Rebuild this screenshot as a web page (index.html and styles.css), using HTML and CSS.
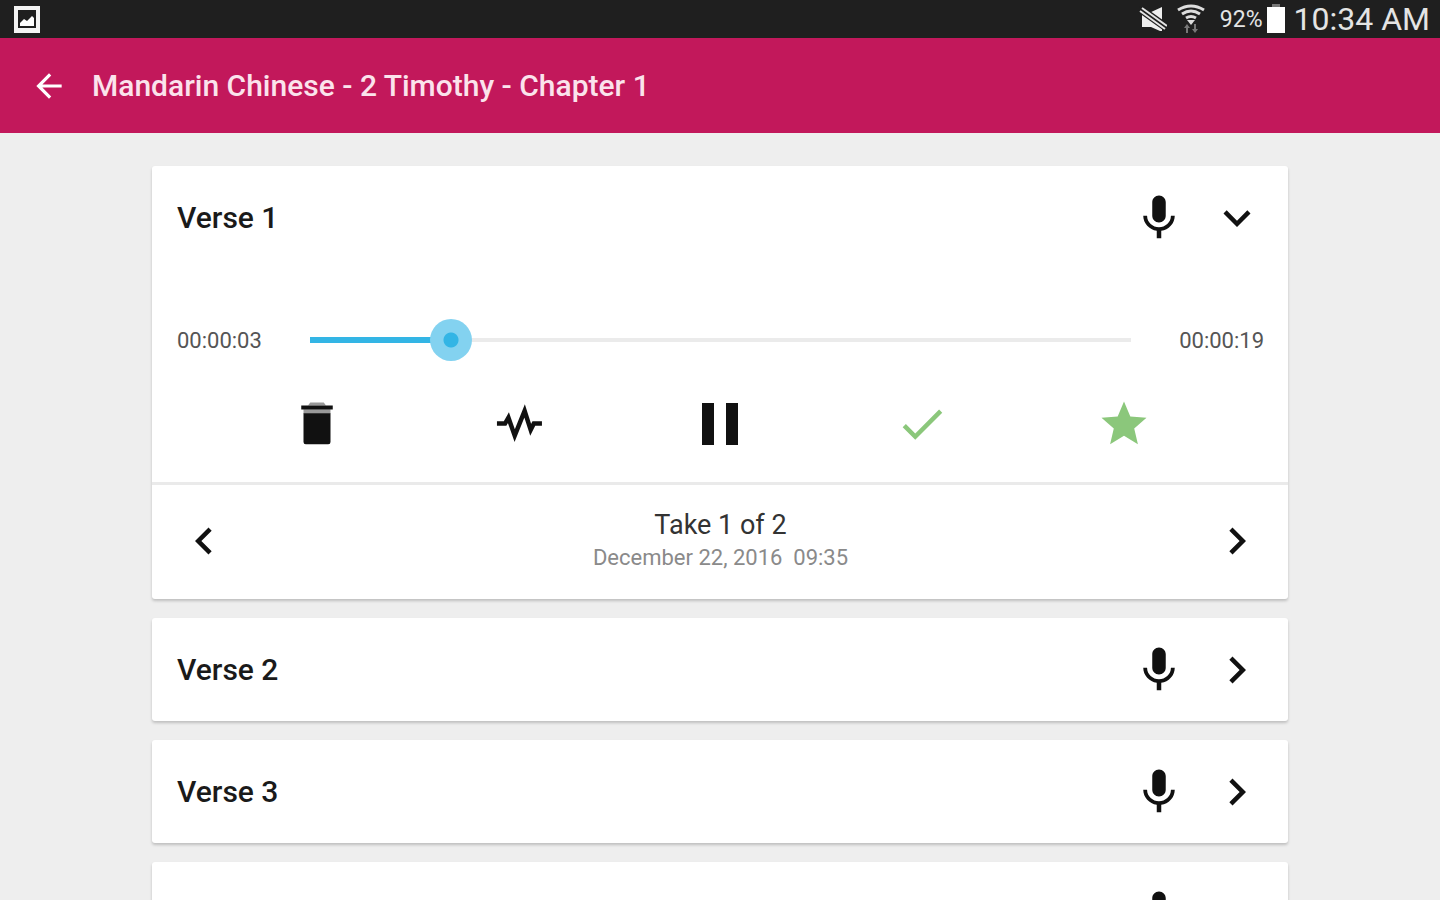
FILE: index.html
```
<!DOCTYPE html>
<html lang="en">
<head>
    <meta charset="UTF-8">
    <meta name="viewport" content="width=device-width, initial-scale=1.0">
    <title>Mandarin Chinese - 2 Timothy - Chapter 1</title>
    <link rel="stylesheet" href="styles.css">
</head>
<body>

<!-- Shared icons -->
<svg class="sprite" aria-hidden="true">
    <symbol id="mic" viewBox="0 0 24 24">
        <path d="M12 14c1.66 0 2.99-1.34 2.99-3L15 5c0-1.66-1.34-3-3-3S9 3.34 9 5v6c0 1.66 1.34 3 3 3zm5.3-3c0 3-2.54 5.1-5.3 5.1S6.7 14 6.7 11H5c0 3.41 2.72 6.23 6 6.72V21h2v-3.28c3.28-.48 6-3.3 6-6.72h-1.7z"/>
    </symbol>
    <symbol id="down" viewBox="0 0 24 24">
        <path d="M16.59 8.59L12 13.17 7.41 8.59 6 10l6 6 6-6z"/>
    </symbol>
    <symbol id="right" viewBox="0 0 24 24">
        <path d="M10 6L8.59 7.41 13.17 12l-4.58 4.59L10 18l6-6z"/>
    </symbol>
    <symbol id="left" viewBox="0 0 24 24">
        <path d="M15.41 7.41L14 6l-6 6 6 6 1.41-1.41L10.83 12z"/>
    </symbol>
</svg>

<div class="status-bar">
    <svg class="status-picture" viewBox="0 0 28 30">
        <path fill="#f4f4f4" fill-rule="evenodd" d="M1 2h26v27H1zM5 6v18h18V6z"/>
        <path fill="#fff" d="M7 22v-3l4-4 3 2 5-5 2 2v8z"/>
    </svg>
    <div class="status-right">
        <svg class="status-mute" viewBox="0 0 28 26">
            <path fill="#eee" d="M3 7h7l13-6v24h-2l-9-4H3z"/>
            <path stroke="#1f1f1f" stroke-width="8" d="M0 2l28 20"/>
            <path stroke="#e4e4e4" stroke-width="2" d="M1 5l25 18M3 2l25 18"/>
        </svg>
        <svg class="status-wifi" viewBox="0 0 28 32">
            <g fill="none" stroke="#ddd" stroke-width="3">
                <path d="M1 7q13-8 26 0"/>
                <path d="M5 11q9-6 18 0"/>
                <path d="M9 15q5-3 10 0"/>
            </g>
            <path fill="#ddd" d="M10 17h8l-4 5z"/>
            <path fill="#777" d="M9 30v-5H7l3-4 3 4h-2v5zM17 21v5h-2l3 4 3-4h-2v-5z"/>
        </svg>
        <span class="battery-level">92%</span>
        <svg class="status-battery" viewBox="0 0 20 30">
            <path fill="#777" d="M6 0h8v4H6z"/>
            <path fill="#fff" d="M1 3h18v26H1z"/>
        </svg>
        <span class="clock">10:34 AM</span>
    </div>
</div>

<header>
    <button class="back" aria-label="Back">
        <svg viewBox="0 0 24 24"><path d="M20 11H7.83l5.59-5.59L12 4l-8 8 8 8 1.41-1.41L7.83 13H20v-2z"/></svg>
    </button>
    <h1>Mandarin Chinese - 2 Timothy - Chapter 1</h1>
</header>

<main class="verses">
    <section class="card">
        <div class="card-header">
            <h2>Verse 1</h2>
            <button aria-label="Record verse 1"><svg class="icon"><use href="#mic"/></svg></button>
            <button aria-label="Collapse verse 1"><svg class="icon"><use href="#down"/></svg></button>
        </div>
        <div class="player">
            <div class="seek">
                <span class="time">00:00:03</span>
                <input type="range" class="seek-bar" min="0" max="19000" value="2930" aria-label="Playback position">
                <span class="time">00:00:19</span>
            </div>
            <div class="actions">
                <button aria-label="Delete take">
                    <svg class="icon" viewBox="0 0 24 24">
                        <path fill="#999" d="M9 2.4h6l1 1.4H8zM6 5.4h12v2H6z"/>
                        <path d="M5 3.8h14v1.8H5zM6 7.2h12V20q0 1-1 1H7q-1 0-1-1z"/>
                    </svg>
                </button>
                <button aria-label="Edit take">
                    <svg class="icon" viewBox="0 0 24 24">
                        <path class="wave" d="M2.2 11.8h3.6l1.5-2.6 2.8 8 4.4-11 2.7 8.4 1.4-2.8h3.6"/>
                    </svg>
                </button>
                <button aria-label="Pause">
                    <svg class="icon icon-large" viewBox="0 0 24 24"><path d="M6 19h4V5H6v14zm8-14v14h4V5h-4z"/></svg>
                </button>
                <button class="green" aria-label="Check take">
                    <svg class="icon" viewBox="0 0 24 24"><path d="M9 16.17L4.83 12l-1.42 1.41L9 19 21 7l-1.41-1.41z"/></svg>
                </button>
                <button class="green" aria-label="Rate take">
                    <svg class="icon" viewBox="0 0 24 24"><path d="M12 17.27L18.18 21l-1.64-7.03L22 9.24l-7.19-.61L12 2 9.19 8.63 2 9.24l5.46 4.73L5.82 21z"/></svg>
                </button>
            </div>
        </div>
        <div class="takes">
            <button aria-label="Previous take"><svg class="icon"><use href="#left"/></svg></button>
            <div class="take-info">
                <p class="take-name">Take 1 of 2</p>
                <p class="take-date">December 22, 2016&nbsp; 09:35</p>
            </div>
            <button aria-label="Next take"><svg class="icon"><use href="#right"/></svg></button>
        </div>
    </section>

    <section class="card">
        <div class="card-header">
            <h2>Verse 2</h2>
            <button aria-label="Record verse 2"><svg class="icon"><use href="#mic"/></svg></button>
            <button aria-label="Expand verse 2"><svg class="icon"><use href="#right"/></svg></button>
        </div>
    </section>

    <section class="card">
        <div class="card-header">
            <h2>Verse 3</h2>
            <button aria-label="Record verse 3"><svg class="icon"><use href="#mic"/></svg></button>
            <button aria-label="Expand verse 3"><svg class="icon"><use href="#right"/></svg></button>
        </div>
    </section>

    <section class="card">
        <div class="card-header">
            <h2>Verse 4</h2>
            <button aria-label="Record verse 4"><svg class="icon"><use href="#mic"/></svg></button>
            <button aria-label="Expand verse 4"><svg class="icon"><use href="#right"/></svg></button>
        </div>
    </section>
</main>

</body>
</html>
```
FILE: styles.css
```
* {
    box-sizing: border-box;
}
body {
    margin: 0;
    font-family: Roboto, "Liberation Sans", sans-serif;
    display: flex;
    flex-direction: column;
    height: 100vh;
    background-color: #eeeeee;
    color: #1a1a1a;
}
h1, h2, p {
    margin: 0;
}
button {
    display: flex;
    align-items: center;
    justify-content: center;
    padding: 0;
    border: none;
    background: none;
    color: #111;
    cursor: pointer;
}
svg {
    display: block;
    fill: currentColor;
}
.sprite {
    display: none;
}
.icon {
    width: 54px;
    height: 54px;
}
.icon-large {
    width: 72px;
    height: 72px;
}
/* Status bar */
.status-bar {
    flex: none;
    display: flex;
    align-items: center;
    justify-content: space-between;
    height: 38px;
    padding: 0 10px 0 13px;
    background-color: #1f1f1f;
    color: #e4e4e4;
}
.status-picture {
    width: 28px;
    height: 30px;
}
.status-right {
    display: flex;
    align-items: center;
}
.status-mute {
    width: 28px;
    height: 26px;
    margin-right: 10px;
}
.status-wifi {
    width: 28px;
    height: 32px;
    margin-right: 15px;
}
.battery-level {
    font-size: 23px;
    margin-right: 3px;
}
.status-battery {
    width: 20px;
    height: 30px;
    margin-right: 8px;
}
.clock {
    font-size: 32px;
}
/* App bar */
header {
    flex: none;
    display: flex;
    align-items: center;
    gap: 24px;
    height: 95px;
    padding: 0 30px;
    background-color: #c2185b;
    color: white;
}
header h1 {
    font-size: 30px;
    font-weight: 500;
    color: #fbe3ec;
}
.back {
    color: white;
}
.back svg {
    width: 38px;
    height: 38px;
}
/* Verse list */
.verses {
    flex: 1;
    display: flex;
    flex-direction: column;
    gap: 19px;
    padding: 33px 152px;
    overflow-y: auto;
    scrollbar-width: none;
}
.card {
    flex: none;
    background-color: white;
    border-radius: 3px;
    box-shadow: 0 2px 3px rgba(0, 0, 0, 0.2);
}
.card-header {
    display: flex;
    align-items: center;
    gap: 24px;
    height: 103px;
    padding: 0 24px 0 25px;
}
.card-header h2 {
    flex: 1;
    font-size: 30px;
    font-weight: 500;
}
/* Player */
.player {
    padding: 44px 24px 22px 25px;
    border-bottom: 3px solid #eaeaea;
}
.seek {
    display: flex;
    align-items: center;
    gap: 48px;
    height: 54px;
}
.time {
    font-size: 22px;
    color: #555;
}
.seek-bar {
    flex: 1;
    min-width: 0;
    height: 44px;
    margin: 0;
    appearance: none;
    background: linear-gradient(#33b5e5, #33b5e5) left center / 17% 6px no-repeat,
        linear-gradient(#ebebeb, #ebebeb) center / 100% 4px no-repeat;
    cursor: pointer;
}
.seek-bar::-webkit-slider-thumb {
    appearance: none;
    width: 42px;
    height: 42px;
    border-radius: 50%;
    background: radial-gradient(circle, #33b5e5 7px, #83d2f0 8px);
}
.actions {
    display: flex;
    margin: 21px 39px 0;
}
.actions button {
    flex: 1;
}
.wave {
    fill: none;
    stroke: currentColor;
    stroke-width: 2;
}
.green {
    color: #8bc77b;
}
/* Takes */
.takes {
    display: flex;
    align-items: center;
    height: 114px;
    padding: 0 24px 3px 25px;
}
.take-info {
    flex: 1;
    text-align: center;
}
.take-name {
    font-size: 27px;
    line-height: 34px;
    color: #333;
}
.take-date {
    font-size: 22px;
    line-height: 32px;
    color: #8a8a8a;
}
@media (max-width: 900px) {
    .verses {
        padding: 24px 16px;
    }
    .actions {
        margin: 21px 0 0;
    }
    .seek {
        gap: 16px;
    }
}
```
